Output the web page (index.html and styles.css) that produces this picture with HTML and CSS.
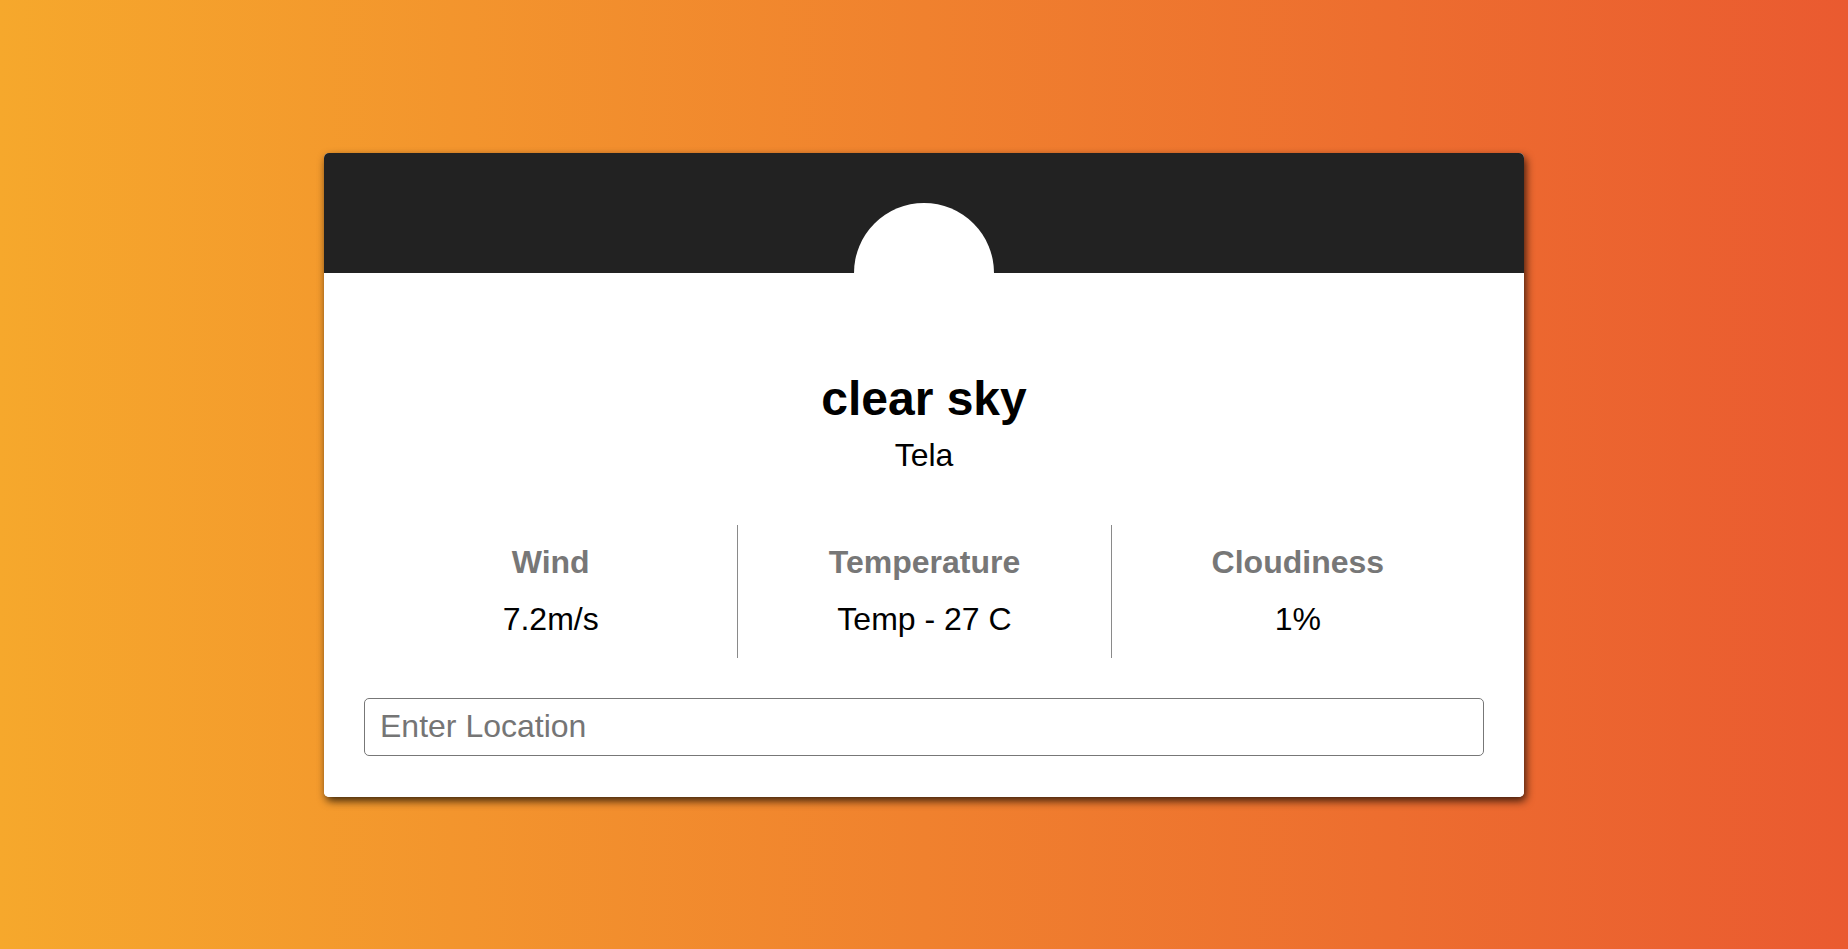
FILE: index.html
```html
<!DOCTYPE html>
<html lang="en">
<head>
<meta charset="utf-8">
<title>Weather</title>
<link rel="stylesheet" href="styles.css">
</head>
<body>
  <div class="card">
    <div class="card-header">
      <div class="icon-circle"></div>
    </div>
    <div class="card-body">
      <h1 class="title">clear sky</h1>
      <div class="location">Tela</div>
      <div class="stats">
        <div class="stat">
          <div class="stat-label">Wind</div>
          <div class="stat-value">7.2m/s</div>
        </div>
        <div class="stat">
          <div class="stat-label">Temperature</div>
          <div class="stat-value">Temp - 27 C</div>
        </div>
        <div class="stat">
          <div class="stat-label">Cloudiness</div>
          <div class="stat-value">1%</div>
        </div>
      </div>
      <input class="search" type="text" placeholder="Enter Location" autofocus>
    </div>
  </div>
</body>
</html>
```
FILE: styles.css
```css
* { box-sizing: border-box; }
html, body { height: 100%; }
body {
  margin: 0;
  font-family: "Liberation Sans", Arial, sans-serif;
  background: linear-gradient(to right, #f6a82c, #ea5a30);
  display: flex;
  align-items: center;
  justify-content: center;
}
.card {
  width: 1200px;
  background: #fff;
  border-radius: 5px;
  overflow: hidden;
  box-shadow: 2px 4px 8px rgba(0, 0, 0, 0.75);
}
.card-header {
  height: 120px;
  background: #222;
  position: relative;
}
.icon-circle {
  position: absolute;
  left: 50%;
  top: 50px;
  width: 140px;
  height: 140px;
  margin-left: -70px;
  border-radius: 50%;
  background: #fff;
}
.card-body {
  position: relative;
  background: #fff;
  padding: 102px 40px 41px;
  text-align: center;
}
.title {
  margin: 0;
  font-size: 48px;
  line-height: 48px;
  font-weight: bold;
  color: #000;
}
.location {
  margin-top: 16px;
  font-size: 32px;
  line-height: 32px;
  color: #000;
}
.stats {
  margin-top: 54px;
  display: grid;
  grid-template-columns: repeat(3, 1fr);
}
.stat {
  padding: 21px 0 23px;
  display: flex;
  flex-direction: column;
  gap: 25px;
}
.stat + .stat { border-left: 1px solid #8a8a8a; }
.stat-label {
  font-size: 32px;
  line-height: 32px;
  font-weight: bold;
  color: #777;
}
.stat-value {
  font-size: 32px;
  line-height: 32px;
  color: #000;
}
.search {
  display: block;
  width: 100%;
  height: 58px;
  margin-top: 40px;
  padding: 0 15px;
  border: 1px solid #777;
  border-radius: 5px;
  font-family: "Liberation Sans", Arial, sans-serif;
  font-size: 32px;
  color: #000;
  outline: none;
  background: #fff;
}
.search::placeholder { color: #757575; }
```
